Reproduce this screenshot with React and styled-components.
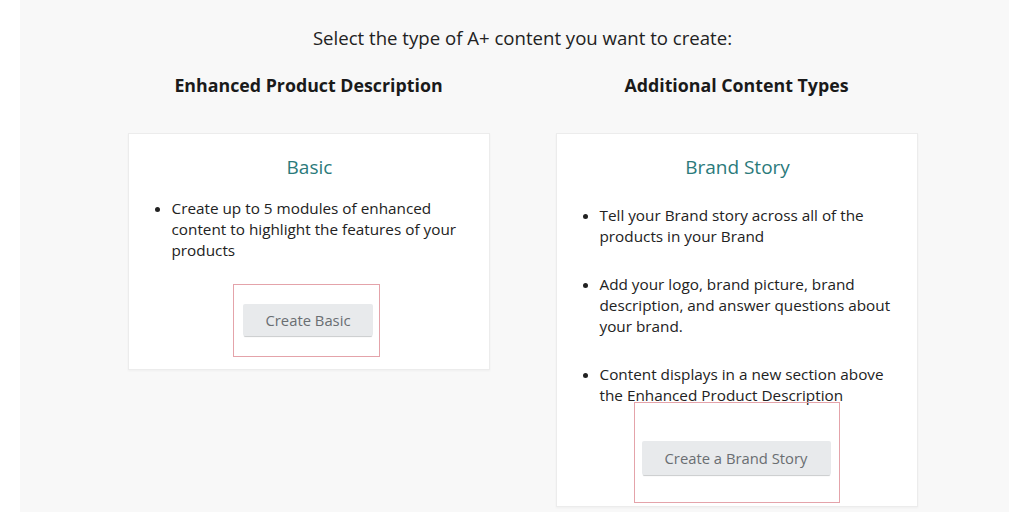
import React from "react";
import styled, { createGlobalStyle } from "styled-components";

const Global = createGlobalStyle`
  html, body { margin: 0; padding: 0; background: #ffffff; }
  body { font-family: "Open Sans", "Noto Sans", sans-serif; color: #111; }
  * { box-sizing: border-box; }
`;

const Panel = styled.div`
  margin: 0 15px 0 20px;
  height: 512px;
  background: #f8f8f8;
  padding: 25px 0 0 16px;
  overflow: hidden;
`;

const Title = styled.h1`
  margin: 0;
  text-align: center;
  font-size: 18.6px;
  font-weight: 400;
  line-height: 26px;
  color: #222;
`;

const Columns = styled.div`
  display: grid;
  grid-template-columns: 362px 362px;
  column-gap: 66px;
  justify-content: center;
  margin-top: 22px;
`;

const Column = styled.div`
  display: flex;
  flex-direction: column;
  align-items: stretch;
`;

const Heading = styled.h2`
  margin: 0 0 36px;
  text-align: center;
  font-size: 17.8px;
  font-weight: 700;
  line-height: 24px;
  color: #1a1a1a;
`;

const Card = styled.div`
  background: #fff;
  border: 1px solid #ececec;
  box-shadow: 0 1px 2px rgba(0, 0, 0, 0.04);
  padding: 20px 18px ${(p) => p.$pb}px 20px;
  display: flex;
  flex-direction: column;
  align-items: center;
`;

const CardTitle = styled.h3`
  margin: 0 0 ${(p) => p.$gap}px;
  font-size: 19px;
  font-weight: 400;
  line-height: 26px;
  color: #2b7a7b;
`;

const List = styled.ul`
  margin: 0;
  padding: 0 0 0 23px;
  align-self: stretch;
  font-size: 15.3px;
  line-height: 21px;
  color: #222;
  li + li { margin-top: 27px; }
`;

const ButtonArea = styled.div`
  position: relative;
  margin-top: ${(p) => p.$mt}px;
  margin-right: 3px;
`;

const Highlight = styled.div`
  position: absolute;
  left: ${(p) => -p.$l}px;
  right: ${(p) => -p.$r}px;
  top: ${(p) => -p.$t}px;
  bottom: ${(p) => -p.$b}px;
  border: 1px solid #e4a3aa;
  pointer-events: none;
`;

const Button = styled.button`
  display: block;
  width: ${(p) => p.$w}px;
  height: ${(p) => p.$h}px;
  border: none;
  border-radius: 2px;
  background: #e8eaec;
  box-shadow: 0 2px 1px -1px #c9cbcd;
  font-family: inherit;
  font-size: 14.8px;
  color: #6a6e72;
  cursor: pointer;
`;

export default function App() {
  return (
    <>
      <Global />
      <Panel>
        <Title>Select the type of A+ content you want to create:</Title>
        <Columns>
          <Column>
            <Heading>Enhanced Product Description</Heading>
            <Card $pb={33}>
              <CardTitle $gap={18}>Basic</CardTitle>
              <List>
                <li>Create up to 5 modules of enhanced content to highlight the features of your products</li>
              </List>
              <ButtonArea $mt={43}>
                <Highlight $l={10} $r={7} $t={20} $b={21} />
                <Button $w={130} $h={32}>Create Basic</Button>
              </ButtonArea>
            </Card>
          </Column>
          <Column>
            <Heading>Additional Content Types</Heading>
            <Card $pb={31}>
              <CardTitle $gap={25}>Brand Story</CardTitle>
              <List>
                <li>Tell your Brand story across all of the products in your Brand</li>
                <li>Add your logo, brand picture, brand description, and answer questions about your brand.</li>
                <li>Content displays in a new section above the Enhanced Product Description</li>
              </List>
              <ButtonArea $mt={35}>
                <Highlight $l={8} $r={9} $t={39} $b={28} />
                <Button $w={189} $h={34}>Create a Brand Story</Button>
              </ButtonArea>
            </Card>
          </Column>
        </Columns>
      </Panel>
    </>
  );
}
